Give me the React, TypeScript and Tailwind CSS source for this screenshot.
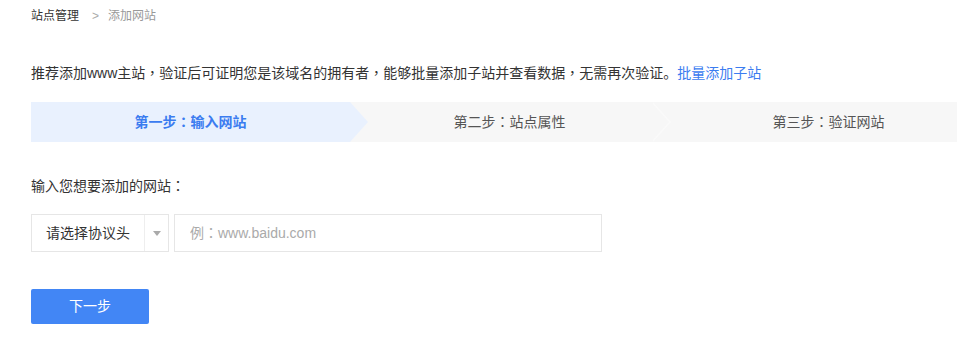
import { useState } from "react";

const FONT = "font-['Liberation_Sans','Noto_Sans_CJK_SC',sans-serif]";

// centred full-width punctuation, like the original font draws it
function P({ c }: { c: string }) {
  return <span className="font-['Noto_Sans_CJK_TC',sans-serif] leading-none">{c}</span>;
}

function Steps() {
  return (
    <div className="mt-[19px] flex h-10 w-[957px] text-[14px] leading-10">
      <div className="relative z-10 w-[319px] shrink-0 bg-[#e9f1fe] text-center font-bold text-[#3b7cf0]">
        第一步<P c="：" />输入网站
        <span className="absolute right-[-18px] top-0 h-0 w-0 border-y-[20px] border-l-[18px] border-y-transparent border-l-[#e9f1fe]" />
      </div>
      <div className="relative w-[319px] shrink-0 bg-[#f7f7f7] text-center text-[#555]">
        第二步<P c="：" />站点属性
        <span className="absolute right-[-2px] top-0 h-0 w-0 border-y-[20px] border-l-[18px] border-y-transparent border-l-white/40" />
        <span className="absolute right-[0px] top-0 h-0 w-0 border-y-[20px] border-l-[18px] border-y-transparent border-l-[#f7f7f7]" />
      </div>
      <div className="w-[319px] shrink-0 bg-[#f7f7f7] text-center text-[#555]">
        第三步<P c="：" />验证网站
      </div>
    </div>
  );
}

export default function App() {
  const [url, setUrl] = useState("");

  return (
    <div className={`h-[337px] w-[957px] overflow-hidden bg-white pl-[31px] ${FONT}`}>
      <div className="flex items-center pt-[6px] text-[12px] leading-5">
        <span className="text-[#333]">站点管理</span>
        <span className="ml-[13px] text-[#aaa]">&gt;</span>
        <span className="ml-[9px] text-[#999]">添加网站</span>
      </div>

      <p className="mt-[37px] h-5 text-[14px] leading-5 text-[#333]">
        推荐添加www主站<P c="，" />验证后可证明您是该域名的拥有者<P c="，" />能够批量添加子站并查看数据<P c="，" />无需再次验证。
        <a href="#" className="text-[#3b7cf0]">批量添加子站</a>
      </p>

      <Steps />

      <div className="mt-[34px] h-5 text-[14px] leading-5 text-[#333]">
        输入您想要添加的网站<P c="：" />
      </div>

      <div className="mt-[18px] flex h-[38px] gap-[5px]">
        <div className="flex w-[138px] border border-[#e6e6e6] text-[14px] text-[#333]">
          <div className="flex w-[113px] items-center border-r border-[#eee] pl-[14px]">请选择协议头</div>
          <div className="flex flex-1 items-center justify-center">
            <span className="h-0 w-0 border-x-[4px] border-t-[5px] border-x-transparent border-t-[#aaa]" />
          </div>
        </div>
        <input
          value={url}
          onChange={(e) => setUrl(e.target.value)}
          placeholder="例：www.baidu.com"
          className="w-[428px] border border-[#e6e6e6] pl-[15px] font-['Liberation_Sans','Noto_Sans_CJK_TC',sans-serif] text-[14px] text-[#333] outline-none placeholder:text-[#aaa]"
        />
      </div>

      <button className="mt-[37px] h-[35px] w-[118px] rounded-[2px] bg-[#4286f5] text-[14px] text-white">
        下一步
      </button>
    </div>
  );
}
